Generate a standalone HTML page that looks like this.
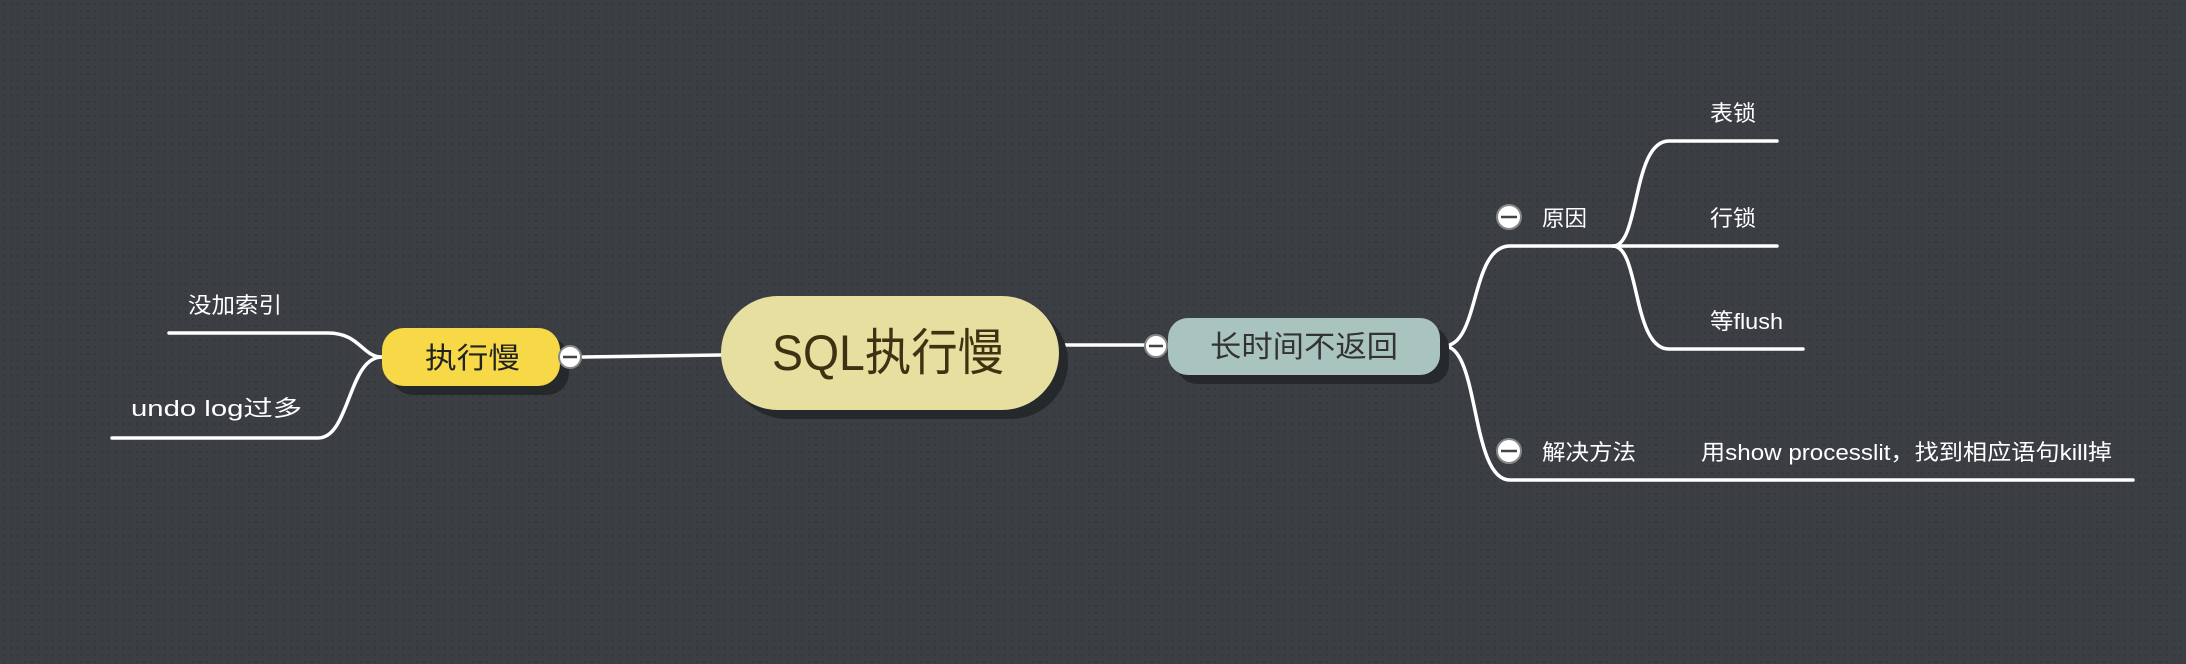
<!DOCTYPE html>
<html><head><meta charset="utf-8"><style>
html,body{margin:0;padding:0;width:2186px;height:664px;overflow:hidden;background:#3b3f44;}
svg{display:block}
text{font-family:"Liberation Sans","Noto Sans CJK SC",sans-serif;}
</style></head><body>
<svg width="2186" height="664" xmlns="http://www.w3.org/2000/svg">
<defs>
<pattern id="dots" width="7" height="7" patternUnits="userSpaceOnUse">
<rect width="7" height="7" fill="#3b3f44"/><rect x="3" y="3" width="2" height="2" fill="#34383c"/>
</pattern>
</defs>
<rect width="2186" height="664" fill="url(#dots)"/>
<g fill="none" stroke="#fff" stroke-width="3.5" stroke-linecap="round">
<path d="M583 357 L721 355"/>
<path d="M169 333 L328 333 C360 333 362 357 382 357"/>
<path d="M112 438 L318 438 C350 438 348 357 382 357"/>
<path d="M1059 345 L1146 345"/>
<path d="M1444 346 C1480 346 1470 246 1510 246 L1613 246"/>
<path d="M1444 346 C1480 346 1470 480 1510 480 L2133 480"/>
<path d="M1613 246 C1640 246 1632 141 1669 141 L1777 141"/>
<path d="M1613 246 L1777 246"/>
<path d="M1613 246 C1640 246 1632 349 1669 349 L1803 349"/>
</g>
<rect x="391" y="337" width="178" height="58" rx="22" fill="#26292c"/>
<rect x="730" y="305" width="338" height="114" rx="57" fill="#26292c"/>
<rect x="1177" y="327" width="272" height="57" rx="20" fill="#26292c"/>
<rect x="382" y="328" width="178" height="58" rx="22" fill="#f7d948"/>
<text x="425" y="368" font-size="29" fill="#222" textLength="95" lengthAdjust="spacingAndGlyphs">执行慢</text>
<rect x="721" y="296" width="338" height="114" rx="57" fill="#e7df9f"/>
<text x="772" y="370" font-size="50" fill="#3f3212" textLength="232" lengthAdjust="spacingAndGlyphs">SQL执行慢</text>
<rect x="1168" y="318" width="272" height="57" rx="20" fill="#a9c4bf"/>
<text x="1210" y="357" font-size="30" fill="#333" textLength="188" lengthAdjust="spacingAndGlyphs">长时间不返回</text>
<g stroke="#888" stroke-width="2" fill="#fff">
<circle cx="570" cy="357" r="11"/>
<circle cx="1156" cy="346" r="11"/>
<circle cx="1509" cy="217" r="12"/>
<circle cx="1509" cy="451" r="12"/>
</g>
<g stroke="#444" stroke-width="2.5">
<path d="M563 357 H577"/><path d="M1149 346 H1163"/><path d="M1501 217 H1517"/><path d="M1501 451 H1517"/>
</g>
<g fill="#fff" font-size="22">
<text x="188" y="313" textLength="94" lengthAdjust="spacingAndGlyphs">没加索引</text>
<text x="131" y="416" textLength="171" lengthAdjust="spacingAndGlyphs">undo log过多</text>
<text x="1542" y="226" textLength="45" lengthAdjust="spacingAndGlyphs">原因</text>
<text x="1542" y="460" textLength="94" lengthAdjust="spacingAndGlyphs">解决方法</text>
<text x="1710" y="121" textLength="46" lengthAdjust="spacingAndGlyphs">表锁</text>
<text x="1710" y="226" textLength="46" lengthAdjust="spacingAndGlyphs">行锁</text>
<text x="1710" y="329" textLength="73" lengthAdjust="spacingAndGlyphs">等flush</text>
<text x="1701" y="460" textLength="411" lengthAdjust="spacingAndGlyphs">用show processlit，找到相应语句kill掉</text>
</g>
</svg>
</body></html>
